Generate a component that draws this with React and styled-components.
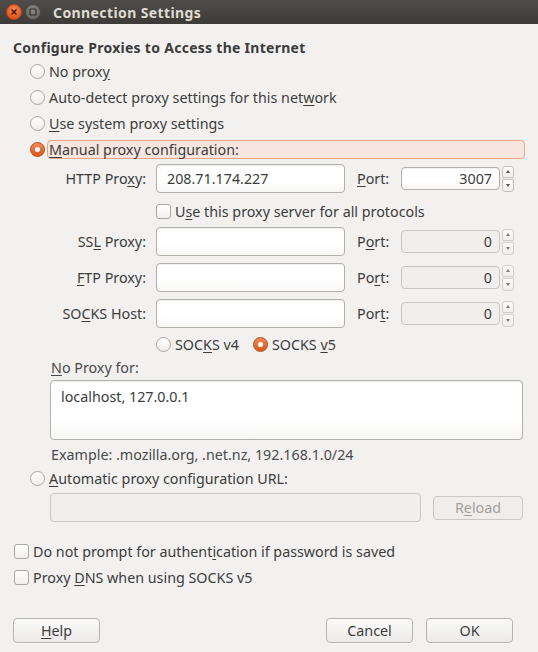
import React from 'react'
import styled, { createGlobalStyle, css } from 'styled-components';

const Global = createGlobalStyle`
  html, body { margin: 0; padding: 0; background: #f2f1f0; }
  body {
    font-family: "Noto Sans", "DejaVu Sans", sans-serif;
    font-size: 14.3px;
    color: #3c3c3c;
  }
  * { box-sizing: border-box; }
`;

const Window = styled.div`
  width: 538px;
  height: 652px;
  display: flex;
  flex-direction: column;
  background: #f2f1f0;
  overflow: hidden;
`;

const TitleBar = styled.div`
  height: 24px;
  flex: none;
  display: flex;
  align-items: center;
  padding-left: 6px;
  gap: 3px;
  background: linear-gradient(#4e4d49, #3c3b37);
  color: #dfdbd2;
  font-weight: bold;
  font-size: 14px;
`;

const WinBtn = styled.div`
  width: 16px;
  height: 16px;
  border-radius: 50%;
  display: flex;
  align-items: center;
  justify-content: center;
  ${({ $close }) => $close ? css`
    background: radial-gradient(circle at 50% 35%, #f68a5c, #e2571d 70%);
    border: 1px solid #b84a1c;
  ` : css`
    background: radial-gradient(circle at 50% 35%, #8a8985, #6c6b67 70%);
    border: 1px solid #4a4945;
  `}
`;

const Title = styled.span`
  margin-left: 9px;
  letter-spacing: 0.4px;
`;

const Body = styled.div`
  flex: 1;
  display: flex;
  flex-direction: column;
  padding: 13px 14px 0 13px;
`;

const Heading = styled.div`
  height: 20px;
  display: flex;
  align-items: center;
  font-weight: bold;
  font-size: 14px;
  letter-spacing: 0.28px;
  color: #3c3c3c;
  margin-bottom: 1px;
`;

const OptionRow = styled.div`
  height: 26px;
  display: flex;
  align-items: center;
  padding-left: 17px;
  gap: 2px;
`;

const OptionLabel = styled.span`
  height: 19px;
  display: flex;
  align-items: center;
  flex: ${({ $fill }) => ($fill ? 1 : 'none')};
  margin-right: ${({ $fill }) => ($fill ? '-1px' : 0)};
  padding-left: 2px;
  ${({ $focus }) => $focus && css`
    background: #f6e6df;
    border: 1px solid #f0a586;
    border-radius: 4px;
    padding-left: 1px;
  `}
`;

const Mn = styled.u`
  text-decoration: underline;
  text-underline-offset: 2px;
`;

const Radio = styled.span`
  width: 15px;
  height: 15px;
  flex: none;
  border-radius: 50%;
  display: inline-flex;
  align-items: center;
  justify-content: center;
  ${({ $on }) => $on ? css`
    background: linear-gradient(#f08a5a, #d9581d);
    border: 1px solid #b24c1a;
    &::after {
      content: '';
      width: 5px;
      height: 5px;
      border-radius: 50%;
      background: #fff;
    }
  ` : css`
    background: linear-gradient(#ffffff, #efeeec);
    border: 1px solid #a9a7a3;
  `}
`;

const Check = styled.span`
  width: 15px;
  height: 15px;
  flex: none;
  border-radius: 3px;
  background: linear-gradient(#ffffff, #f0efed);
  border: 1px solid #a9a7a3;
`;

const Manual = styled.div`
  display: flex;
  flex-direction: column;
  padding-left: 37px;
  margin-top: 2px;
`;

const FieldRow = styled.div`
  height: 29px;
  display: flex;
  align-items: center;
  margin-bottom: ${({ $gap }) => $gap || 0}px;
`;

const FieldLabel = styled.span`
  width: 96px;
  text-align: right;
  margin-right: 10px;
  flex: none;
  white-space: nowrap;
`;

const TextInput = styled.div`
  width: ${({ $w }) => $w}px;
  height: ${({ $h }) => $h || 29}px;
  flex: none;
  border-radius: 4px;
  display: flex;
  align-items: ${({ $top }) => ($top ? 'flex-start' : 'center')};
  justify-content: ${({ $right }) => ($right ? 'flex-end' : 'flex-start')};
  padding: ${({ $top }) => ($top ? '6px 10px' : '0 7px 0 10px')};
  color: #3c3c3c;
  ${({ $disabled }) => $disabled ? css`
    background: #f0efee;
    border: 1px solid #c9c6c2;
  ` : css`
    background: linear-gradient(#ffffff 60%, #f7f7f6);
    border: 1px solid #b3b0ab;
    box-shadow: inset 0 1px 1px rgba(0, 0, 0, 0.06);
  `}
`;

const PortLabel = styled.span`
  margin-left: 12px;
  width: 44px;
  flex: none;
`;

const PortWrap = styled.div`
  display: flex;
  align-items: center;
  gap: 2px;
`;

const Spinner = styled.div`
  width: 12px;
  height: 26px;
  display: flex;
  flex-direction: column;
  gap: 1px;
  opacity: ${({ $dim }) => ($dim ? 0.75 : 1)};
`;

const SpinBtn = styled.div`
  flex: 1;
  border: 1px solid #c4c1bc;
  border-radius: ${({ $up }) => ($up ? '3px 3px 1px 1px' : '1px 1px 3px 3px')};
  background: linear-gradient(#fdfdfd, #efeeec);
  display: flex;
  align-items: center;
  justify-content: center;
  &::after {
    content: '';
    border-left: 2px solid transparent;
    border-right: 2px solid transparent;
    ${({ $up }) => $up
      ? css`border-bottom: 3px solid #55534f;`
      : css`border-top: 3px solid #55534f;`}
  }
`;

const CheckRow = styled.div`
  height: ${({ $h }) => $h || 26}px;
  display: flex;
  align-items: center;
  gap: 4px;
  padding-left: ${({ $indent }) => $indent || 0}px;
  padding-top: ${({ $pt }) => $pt || 0}px;
`;

const SocksRow = styled.div`
  height: 32px;
  display: flex;
  align-items: center;
  padding-left: 106px;
  gap: 4px;
`;

const Spacer = styled.span`
  width: ${({ $w }) => $w}px;
  flex: none;
`;

const NoProxy = styled.div`
  display: flex;
  flex-direction: column;
  padding-left: 37px;
`;

const SmallLabel = styled.div`
  height: 20px;
  display: flex;
  align-items: center;
  padding: 0 0 6px 1px;
  color: #4a4a4a;
`;

const Hint = styled.div`
  height: 25px;
  display: flex;
  align-items: center;
  padding: 3px 0 0 1px;
  color: #4a4a4a;
`;

const UrlRow = styled.div`
  display: flex;
  align-items: center;
  padding-left: 37px;
  gap: 12px;
  margin-top: 2px;
`;

const Button = styled.div`
  width: ${({ $w }) => $w || 87}px;
  height: ${({ $h }) => $h || 25}px;
  border-radius: 4px;
  display: flex;
  align-items: center;
  justify-content: center;
  ${({ $disabled }) => $disabled ? css`
    color: #a39f99;
    border: 1px solid #cbc8c3;
    background: #efeeed;
  ` : css`
    color: #3c3c3c;
    border: 1px solid #b6b3ae;
    background: linear-gradient(#fbfbfb, #ebeae8);
    box-shadow: 0 1px 0 rgba(255, 255, 255, 0.6);
  `}
`;

const Footer = styled.div`
  margin-top: auto;
  display: flex;
  align-items: center;
  padding: 0 11px 9px 0;
  gap: 13px;
`;

const Push = styled.div`
  flex: 1;
`;

const Radios = [
  { key: 'none', label: <>No prox<Mn>y</Mn></> },
  { key: 'auto', label: <>Auto-detect proxy settings for this net<Mn>w</Mn>ork</> },
  { key: 'sys', label: <><Mn>U</Mn>se system proxy settings</> },
];

const Fields = [
  { label: <>SS<Mn>L</Mn> Proxy:</>, port: <>P<Mn>o</Mn>rt:</> },
  { label: <><Mn>F</Mn>TP Proxy:</>, port: <>Po<Mn>r</Mn>t:</> },
  { label: <>SO<Mn>C</Mn>KS Host:</>, port: <>Por<Mn>t</Mn>:</> },
];

function PortField({ value, dim }) {
  return (
    <PortWrap>
      <TextInput $w={99} $h={23} $right $disabled={dim}>{value}</TextInput>
      <Spinner $dim={dim}>
        <SpinBtn $up />
        <SpinBtn />
      </Spinner>
    </PortWrap>
  );
}

export default function App() {
  return (
    <Window>
      <Global />
      <TitleBar>
        <WinBtn $close>
          <svg width="8" height="8" viewBox="0 0 8 8">
            <path d="M1.5 1.5 L6.5 6.5 M6.5 1.5 L1.5 6.5" stroke="#3a1708" strokeWidth="1.4" />
          </svg>
        </WinBtn>
        <WinBtn>
          <svg width="8" height="8" viewBox="0 0 8 8">
            <rect x="1" y="1" width="6" height="6" rx="1" fill="none" stroke="#2e2d2a" strokeWidth="1.2" />
          </svg>
        </WinBtn>
        <Title>Connection Settings</Title>
      </TitleBar>

      <Body>
        <Heading>Configure Proxies to Access the Internet</Heading>

        {Radios.map((r) => (
          <OptionRow key={r.key}>
            <Radio />
            <OptionLabel>{r.label}</OptionLabel>
          </OptionRow>
        ))}
        <OptionRow>
          <Radio $on />
          <OptionLabel $fill $focus><Mn>M</Mn>anual proxy configuration:</OptionLabel>
        </OptionRow>

        <Manual>
          <FieldRow>
            <FieldLabel>HTTP Pro<Mn>x</Mn>y:</FieldLabel>
            <TextInput $w={189}>208.71.174.227</TextInput>
            <PortLabel><Mn>P</Mn>ort:</PortLabel>
            <PortField value="3007" />
          </FieldRow>
          <CheckRow $h={34} $indent={106} $pt={2}>
            <Check />
            <span>U<Mn>s</Mn>e this proxy server for all protocols</span>
          </CheckRow>
          {Fields.map((f, i) => (
            <FieldRow key={i} $gap={i < 2 ? 7 : 0}>
              <FieldLabel>{f.label}</FieldLabel>
              <TextInput $w={189} />
              <PortLabel>{f.port}</PortLabel>
              <PortField value="0" dim />
            </FieldRow>
          ))}
          <SocksRow>
            <Radio />
            <span>SOC<Mn>K</Mn>S v4</span>
            <Spacer $w={6} />
            <Radio $on />
            <span>SOCKS <Mn>v</Mn>5</span>
          </SocksRow>
        </Manual>

        <NoProxy>
          <SmallLabel><span><Mn>N</Mn>o Proxy for:</span></SmallLabel>
          <TextInput $w={473} $h={60} $top>localhost, 127.0.0.1</TextInput>
          <Hint>Example: .mozilla.org, .net.nz, 192.168.1.0/24</Hint>
        </NoProxy>

        <OptionRow>
          <Radio />
          <OptionLabel><Mn>A</Mn>utomatic proxy configuration URL:</OptionLabel>
        </OptionRow>
        <UrlRow>
          <TextInput $w={371} $disabled />
          <Button $w={90} $h={24} $disabled>R<Mn>e</Mn>load</Button>
        </UrlRow>

        <CheckRow $pt={16} $h={42} $indent={1}>
          <Check />
          <span>Do not prompt for authent<Mn>i</Mn>cation if password is saved</span>
        </CheckRow>
        <CheckRow $indent={1}>
          <Check />
          <span>Proxy <Mn>D</Mn>NS when using SOCKS v5</span>
        </CheckRow>

        <Footer>
          <Button><Mn>H</Mn>elp</Button>
          <Push />
          <Button>Cancel</Button>
          <Button>OK</Button>
        </Footer>
      </Body>
    </Window>
  );
}
